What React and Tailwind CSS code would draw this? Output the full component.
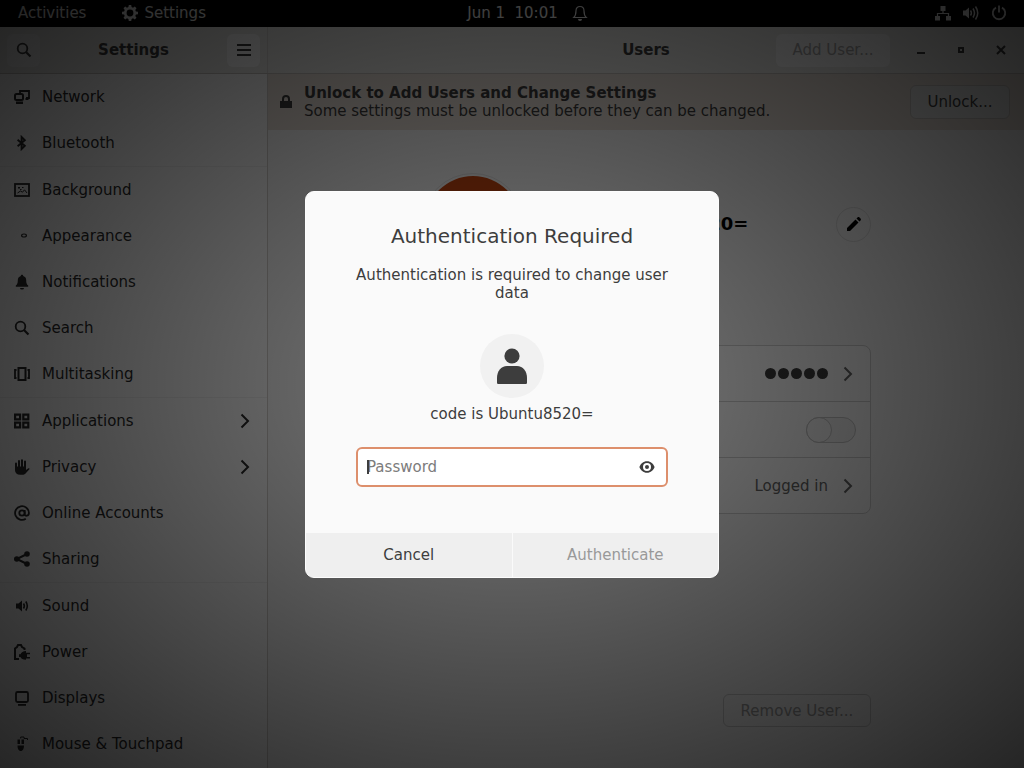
import clsx from "clsx";

function Icon({ size = 16, className, children }) {
  return (
    <svg
      width={size}
      height={size}
      viewBox="0 0 16 16"
      fill="currentColor"
      className={clsx("shrink-0", className)}
      aria-hidden="true"
    >
      {children}
    </svg>
  );
}

function Chevron() {
  return (
    <Icon>
      <path d="M4.5 1.5 11 8l-6.5 6.5" fill="none" stroke="currentColor" strokeWidth="2" />
    </Icon>
  );
}

const searchPath = (
  <>
    <circle cx="6.5" cy="6.5" r="4.8" fill="none" stroke="currentColor" strokeWidth="1.8" />
    <path d="m10 10 4.5 4.5" stroke="currentColor" strokeWidth="2.2" />
  </>
);

const speakerPath = <path d="M2 5.5h2.5L8 2.5v11l-3.5-3H2z" />;

const sidebarItems = [
  {
    name: "Network",
    icon: (
      <>
        <path d="M6 4V2h9v7h-3" fill="none" stroke="currentColor" strokeWidth="1.8" />
        <rect x="1" y="5" width="8" height="6" rx="1.5" fill="none" stroke="currentColor" strokeWidth="2" />
        <path d="M2 12.5h7V15H2zM11.5 9h3v2h-3z" />
      </>
    ),
  },
  {
    name: "Bluetooth",
    divider: true,
    icon: (
      <path
        d="m3.6 4.8 7.2 6L7.6 14V2l3.2 3.2-7.2 6"
        fill="none"
        stroke="currentColor"
        strokeWidth="1.9"
      />
    ),
  },
  {
    name: "Background",
    icon: (
      <>
        <rect x="1" y="2" width="14" height="12" fill="none" stroke="currentColor" strokeWidth="1.8" />
        <path d="m3.5 11 3-2 2 1.2 2-2.4 2.5 3.2" fill="none" stroke="currentColor" />
        <path d="M4 5h2v1.5H4zM8 5h1.5v1H8zM6 7h1.5v1H6z" />
      </>
    ),
  },
  {
    name: "Appearance",
    icon: <ellipse cx="10" cy="7.5" rx="2.4" ry="1.5" fill="none" stroke="currentColor" strokeWidth="1.2" />,
  },
  {
    name: "Notifications",
    icon: (
      <path d="M8 .8c.8 0 1.2.5 1.2 1.2 2 .6 3 2.2 3 4.3 0 3 .6 4.2 2 5.2v1.3H1.8v-1.3c1.4-1 2-2.2 2-5.2 0-2.1 1-3.7 3-4.3C6.8 1.3 7.2.8 8 .8zM6 14h4a2 1.6 0 0 1-4 0z" />
    ),
  },
  { name: "Search", icon: searchPath },
  {
    name: "Multitasking",
    divider: true,
    icon: (
      <>
        <rect x="4.5" y="2" width="7" height="12" fill="none" stroke="currentColor" strokeWidth="2" />
        <path d="M2.5 4H1v8h1.5M13.5 4H15v8h-1.5" fill="none" stroke="currentColor" strokeWidth="1.8" />
      </>
    ),
  },
  {
    name: "Applications",
    arrow: true,
    icon: (
      <path
        d="M0 .5h7.2v7H0zm2.2 2.2v2.6H5V2.7zM8.2.5h7.2v7H8.2zm2.2 2.2v2.6h2.8V2.7zM0 8.5h7.2v7H0zm2.2 2.2v2.6H5v-2.6zM8.2 8.5h7.2v7H8.2zm2.2 2.2v2.6h2.8v-2.6z"
        fillRule="evenodd"
      />
    ),
  },
  {
    name: "Privacy",
    arrow: true,
    icon: (
      <>
        <path
          d="M2 9V4.5M5 8V2M8 8V1.2M11 8V2.5"
          fill="none"
          stroke="currentColor"
          strokeWidth="2"
          strokeLinecap="round"
        />
        <path d="M1 7.5h11V11l2.4-1.8c.8-.3 1.4.4 1 1L12 14c-.8 1-2 1.8-3.5 1.8H6c-3 0-5-1.8-5-4.5z" />
      </>
    ),
  },
  {
    name: "Online Accounts",
    icon: (
      <>
        <circle cx="8" cy="8" r="2.7" fill="none" stroke="currentColor" strokeWidth="1.8" />
        <path
          d="M10.7 5v4.2c0 2.2 4.2 2.2 4.2-1.2A6.9 6.9 0 1 0 11.8 13.8"
          fill="none"
          stroke="currentColor"
          strokeWidth="1.8"
        />
      </>
    ),
  },
  {
    name: "Sharing",
    divider: true,
    icon: (
      <>
        <circle cx="13" cy="3" r="2.8" />
        <circle cx="13" cy="13" r="2.8" />
        <circle cx="2.8" cy="8" r="2.8" />
        <path d="M13 3 2.8 8 13 13" fill="none" stroke="currentColor" strokeWidth="2" />
      </>
    ),
  },
  {
    name: "Sound",
    icon: (
      <>
        {speakerPath}
        <path
          d="M9.5 5.5q1.7 2.5 0 5M11.8 3.5q3 4.5 0 9"
          fill="none"
          stroke="currentColor"
          strokeWidth="1.6"
        />
      </>
    ),
  },
  {
    name: "Power",
    icon: (
      <>
        <path
          d="M5 15H1V4.5L3 3l1-2h3l1 2 2.5 1.5V6"
          fill="none"
          stroke="currentColor"
          strokeWidth="2"
        />
        <path d="M6.500 10.200C7.200 8.300 9 7 12 7v1.700h4v1.600h-3V13h3v1.600h-4v1.200c-3 0-4.800-1-5.500-2.800H5v-2.800z" />
      </>
    ),
  },
  {
    name: "Displays",
    icon: (
      <>
        <rect x="2" y="2" width="12" height="10" rx="1.5" fill="none" stroke="currentColor" strokeWidth="1.8" />
        <path d="M4 14h8v1.8H4z" />
      </>
    ),
  },
  {
    name: "Mouse & Touchpad",
    icon: (
      <>
        <path d="M3.5 3.5H6v4.5H3.5zM7.5 3.5H10v4.5H7.5zM3.5 9.5H10c0 3-1 5.5-3.2 5.5s-3.3-2.5-3.3-5.5z" />
        <path d="M6.7 2.5V1H10v1.5h3.5V4" fill="none" stroke="currentColor" />
      </>
    ),
  },
];

function TopBar() {
  return (
    <div className="grid h-[27px] shrink-0 grid-cols-[1fr_auto_1fr] items-center bg-black pr-[17px] pb-[2px] pl-[18px] text-[#f2f2f2]">
      <div className="flex items-center">
        <button type="button">Activities</button>
        <button type="button" className="ml-9 flex items-center gap-[6px]">
          <Icon>
            <path
              d="M6.8 0h2.4l.4 2.1 1.4.6L12.8 1.5l1.7 1.7-1.2 1.8.6 1.4 2.1.4v2.4l-2.1.4-.6 1.4 1.2 1.8-1.7 1.7L11 13.3l-1.4.6L9.2 16H6.8l-.4-2.1-1.4-.6-1.8 1.2-1.7-1.7L2.7 11l-.6-1.4L0 9.2V6.8l2.1-.4L2.7 5 1.5 3.2l1.7-1.7L5 2.7l1.4-.6zM8 4.600a3.400 3.400 0 1 0 0 6.800 3.400 3.400 0 0 0 0-6.800z"
              fillRule="evenodd"
            />
          </Icon>
          Settings
        </button>
      </div>
      <div className="relative">
        <button type="button" className="whitespace-pre">
          Jun 1  10:01
        </button>
        <Icon className="absolute top-[2px] left-full ml-[14px]">
          <path
            d="M8 1.5c-2.6 0-4 1.8-4 4.3 0 3.7-.6 5.2-2.2 6.7h12.4C12.6 11 12 9.5 12 5.8c0-2.5-1.4-4.3-4-4.3z"
            fill="none"
            stroke="currentColor"
            strokeWidth="1.2"
          />
          <path d="M6 14h4a2 2 0 0 1-4 0z" />
        </Icon>
      </div>
      <div className="flex items-center justify-end gap-3">
        <Icon>
          <path d="M5.5 1h5v5h-5zM0 11h5v4.5H0zM11 11h5v4.5h-5z" />
          <path d="M8 5v3.5M2.5 11V8.5h11V11" fill="none" stroke="currentColor" strokeWidth="1.2" />
        </Icon>
        <Icon>
          <path d="M0 5.5h2.5L6 2.5v11l-3.5-3H0z" />
          <path
            d="M7.5 5.5q1.7 2.5 0 5M10 3.5q3 4.5 0 9M12.5 1.5q4.5 6.5 0 13"
            fill="none"
            stroke="currentColor"
            strokeWidth="1.5"
          />
        </Icon>
        <Icon>
          <path
            d="M5 2.6a6.2 6.2 0 1 0 6 0M8 .5v7"
            fill="none"
            stroke="currentColor"
            strokeWidth="1.8"
          />
        </Icon>
      </div>
    </div>
  );
}

function HeaderBar() {
  return (
    <header className="flex h-[47px] shrink-0 border-b border-[#c8c4c0] bg-[#ebebe8]">
      <div className="flex w-[268px] shrink-0 items-center justify-between border-r border-[#d8d5d2] px-[7px]">
        <button
          type="button"
          aria-label="Search"
          className="flex h-[33px] w-[33px] items-center justify-center rounded-md bg-[#f5f5f5]"
        >
          <Icon>{searchPath}</Icon>
        </button>
        <h1 className="font-bold">Settings</h1>
        <button
          type="button"
          aria-label="Menu"
          className="flex h-[33px] w-[33px] items-center justify-center rounded-md bg-[#fcfcfc]"
        >
          <Icon>
            <path d="M1 2h14v2H1zM1 7h14v2H1zM1 12h14v2H1z" />
          </Icon>
        </button>
      </div>
      <div className="grid flex-1 grid-cols-[1fr_auto_1fr] items-center">
        <span />
        <h2 className="font-bold">Users</h2>
        <div className="flex items-center justify-end pr-[3px]">
          <button
            type="button"
            disabled
            className="mr-[11px] h-[33px] w-[114px] rounded-md bg-[#fafafa] text-[#a8a8a8]"
          >
            Add User...
          </button>
          <button type="button" aria-label="Minimize" className="flex w-10 justify-center">
            <Icon>
              <path d="M4 10h8v2H4z" />
            </Icon>
          </button>
          <button type="button" aria-label="Maximize" className="flex w-10 justify-center">
            <Icon>
              <path d="M5 5h6v6H5zm2 2v2h2V7z" fillRule="evenodd" />
            </Icon>
          </button>
          <button type="button" aria-label="Close" className="flex w-10 justify-center">
            <Icon>
              <path d="m4 4 8 8m0-8-8 8" stroke="currentColor" strokeWidth="2" />
            </Icon>
          </button>
        </div>
      </div>
    </header>
  );
}

function Sidebar() {
  return (
    <nav className="w-[268px] shrink-0 overflow-hidden border-r border-[#d4d0cc] bg-white text-[#2a2a2a]">
      {sidebarItems.map((item) => (
        <a
          key={item.name}
          href="#"
          className={clsx(
            "box-content flex h-[46px] items-center gap-3 px-[14px]",
            item.divider && "border-b border-[#f2f2f2]"
          )}
        >
          <Icon>{item.icon}</Icon>
          <span className="flex-1">{item.name}</span>
          {item.arrow && <Chevron />}
        </a>
      ))}
    </nav>
  );
}

function UsersPanel() {
  return (
    <main className="flex min-w-0 flex-1 flex-col bg-[#fafafa]">
      <div className="flex h-[56px] shrink-0 items-center bg-[#e9e0d8] pr-[14px] pl-[10px]">
        <Icon>
          <path d="M2 7h12v7H2z" />
          <path d="M5 8V5a3 3 0 0 1 6 0v3" fill="none" stroke="currentColor" strokeWidth="2" />
        </Icon>
        <div className="ml-[10px] flex-1 leading-[18px]">
          <p className="font-bold">Unlock to Add Users and Change Settings</p>
          <p>Some settings must be unlocked before they can be changed.</p>
        </div>
        <button
          type="button"
          className="h-[34px] w-[100px] rounded-md border border-[#ccc8c4] bg-[#e8e9e8]"
        >
          Unlock...
        </button>
      </div>

      <div className="mx-auto flex w-[450px] flex-1 flex-col pt-[46px] pb-[41px]">
        <div className="flex items-center pl-1">
          <div className="h-24 w-24 shrink-0 rounded-full bg-[#c84610] outline-1 outline-offset-2 outline-[#e4e4e4]" />
          <p className="ml-[10px] flex-1 text-[18px] font-bold whitespace-nowrap text-black">
            code is Ubuntu8520=
          </p>
          <button
            type="button"
            aria-label="Edit name"
            className="flex h-[35px] w-[35px] shrink-0 items-center justify-center rounded-full border border-[#e0e0e0] bg-[#fafafa] text-black"
          >
            <Icon>
              <path d="M1 12 9.5 3.5l3 3L4 15H1zM10.5 2.5l1-1c.6-.6 1.4-.6 2 0l1 1c.6.6.6 1.4 0 2l-1 1z" />
            </Icon>
          </button>
        </div>

        <ul className="mt-[73px] divide-y divide-[#d2d2d2] rounded-lg border border-[#d2d2d2] bg-white text-[#666]">
          <li className="flex h-[56px] items-center justify-end gap-3 pr-[14px]">
            <div className="flex gap-[2px]">
              {[0, 1, 2, 3, 4].map((dot) => (
                <span key={dot} className="h-[11px] w-[11px] rounded-full bg-[#3d3d3d]" />
              ))}
            </div>
            <Chevron />
          </li>
          <li className="flex h-[56px] items-center justify-end pr-[14px]">
            <button
              type="button"
              role="switch"
              aria-checked="false"
              aria-label="Automatic Login"
              className="flex h-[26px] w-[50px] items-center rounded-full border border-[#c8c8c8] bg-[#f4f4f4]"
            >
              <span className="h-6 w-6 rounded-full bg-[#fafafa] outline-1 outline-[#c8c8c8]" />
            </button>
          </li>
          <li className="flex h-[55px] items-center justify-end gap-3 pr-[14px]">
            <span>Logged in</span>
            <Chevron />
          </li>
        </ul>

        <button
          type="button"
          disabled
          className="mt-auto h-[33px] w-[148px] self-end rounded-md border border-[#cfcfcf] bg-[#fafafa] text-[#a0a0a0]"
        >
          Remove User...
        </button>
      </div>
    </main>
  );
}

function AuthDialog() {
  return (
    <form
      role="dialog"
      aria-modal="true"
      aria-labelledby="auth-title"
      className="flex w-[414px] flex-col overflow-hidden rounded-[9px] border border-[#fdfdfd] bg-[#fafafa] text-center text-[#3d3d3d]"
      onSubmit={(e) => e.preventDefault()}
    >
      <div className="flex flex-col items-center px-[50px] pt-8 pb-[46px]">
        <h2 id="auth-title" className="text-[20px] leading-6">
          Authentication Required
        </h2>
        <p className="mt-[18px] leading-[18px] whitespace-nowrap">
          Authentication is required to change user
          <br />
          data
        </p>
        <div className="mt-8 flex h-16 w-16 items-center justify-center rounded-full bg-[#f1f1f1]">
          <svg width="32" height="38" viewBox="0 0 32 38" fill="currentColor" aria-hidden="true">
            <circle cx="16" cy="9" r="7.6" />
            <path d="M1 31c0-7 4-12 10-12h10c6 0 10 5 10 12v4.5c0 1-.6 1.5-1.5 1.5h-27C1.6 37 1 36.5 1 35.5z" />
          </svg>
        </div>
        <p className="mt-[6px] leading-5">code is Ubuntu8520=</p>
        <div className="relative mt-[23px] w-full">
          <input
            type="password"
            aria-label="Password"
            placeholder="Password"
            className="h-10 w-full rounded-md border-2 border-[#dd8f6c] bg-white pr-10 pl-[9px] outline-none placeholder:text-[#7c7c7c]"
          />
          <span className="absolute top-[13px] left-[11px] h-[14px] w-[2px] bg-[#3d3d3d]" />
          <button type="button" aria-label="Show password" className="absolute top-3 right-[13px]">
            <Icon>
              <path
                d="M8 2.2c3.8 0 6.4 2.6 7.6 5.8-1.2 3.2-3.8 5.8-7.6 5.8S1.6 11.2.4 8C1.6 4.8 4.2 2.2 8 2.2zM8 4a4 4 0 1 0 0 8 4 4 0 0 0 0-8zm0 2a2 2 0 1 1 0 4 2 2 0 0 1 0-4z"
                fillRule="evenodd"
              />
            </Icon>
          </button>
        </div>
      </div>
      <div className="grid h-[44px] grid-cols-2 gap-px">
        <button type="button" className="bg-[#efefef]">
          Cancel
        </button>
        <button type="submit" disabled className="bg-[#efefef] text-[#999]">
          Authenticate
        </button>
      </div>
    </form>
  );
}

export default function App() {
  return (
    <div className="relative flex h-screen flex-col overflow-hidden font-['DejaVu_Sans',sans-serif] text-[15px] leading-5 text-[#3d3d3d]">
      <TopBar />
      <HeaderBar />
      <div className="flex min-h-0 flex-1">
        <Sidebar />
        <UsersPanel />
      </div>

      {/* Modal backdrop with vignette */}
      <div className="absolute inset-0 flex items-center justify-center bg-[radial-gradient(ellipse_farthest-corner_at_center,rgba(0,0,0,0.5),rgba(0,0,0,0.85))]">
        <AuthDialog />
      </div>
    </div>
  );
}
